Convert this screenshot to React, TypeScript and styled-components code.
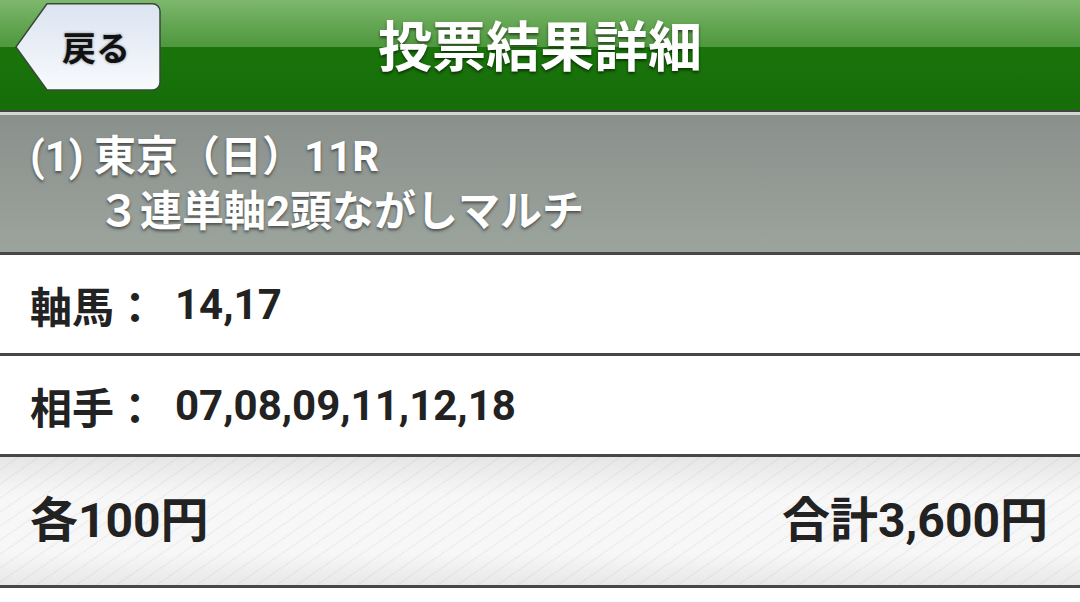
import React from "react";
import styled, { createGlobalStyle } from "styled-components";

const GlobalStyle = createGlobalStyle`
  html, body {
    margin: 0;
    padding: 0;
    background: #ffffff;
  }
  body {
    font-family: Roboto, "Noto Sans CJK JP", sans-serif;
    font-weight: 700;
  }
`;

const rows = [
  { label: "軸馬：", value: "14,17" },
  { label: "相手：", value: "07,08,09,11,12,18" },
];

export default function App() {
  return (
    <>
      <GlobalStyle />
      <Page>
        <Header>
          <BackButton type="button">
            <BackShape viewBox="0 0 146 88" aria-hidden="true">
              <defs>
                <linearGradient id="backFill" x1="0" y1="0" x2="0" y2="1">
                  <stop offset="0" stopColor="#dbe4f1" />
                  <stop offset="1" stopColor="#f8fafd" />
                </linearGradient>
              </defs>
              <path
                d="M32 0.75 H137.5 a7.5 7.5 0 0 1 7.5 7.5 V79.5 a7.5 7.5 0 0 1 -7.5 7.5 H32 L0.9 44 Z"
                fill="url(#backFill)"
                stroke="#3a4838"
                strokeWidth="1.5"
              />
            </BackShape>
            <BackLabel>戻る</BackLabel>
          </BackButton>
          <Title>投票結果詳細</Title>
        </Header>

        <RaceInfo>
          <RaceLine>(1) 東京（日）11R</RaceLine>
          <RaceLine indent>３連単軸2頭ながしマルチ</RaceLine>
        </RaceInfo>

        {rows.map((row) => (
          <DetailRow key={row.label}>
            <RowLabel>{row.label}</RowLabel>
            <RowValue>{row.value}</RowValue>
          </DetailRow>
        ))}

        <Summary>
          <Amount>各100円</Amount>
          <Amount>合計3,600円</Amount>
        </Summary>
      </Page>
    </>
  );
}

const Page = styled.div`
  width: 1080px;
  min-height: 602px;
  background: #ffffff;
`;

const Header = styled.header`
  display: grid;
  grid-template-columns: 1fr auto 1fr;
  align-items: start;
  height: 110px;
  padding-left: 15px;
  background: linear-gradient(
    to bottom,
    #7eb86e 0,
    #64a653 24px,
    #4e983e 47px,
    #1a740b 47px,
    #166d09 100%
  );
  border-bottom: 2px solid #3d483b;
`;

const BackButton = styled.button`
  position: relative;
  justify-self: start;
  margin-top: 3px;
  width: 146px;
  height: 88px;
  padding: 0 0 0 47px;
  border: none;
  background: transparent;
  display: flex;
  align-items: center;
  cursor: pointer;
`;

const BackShape = styled.svg`
  position: absolute;
  inset: 0;
  width: 146px;
  height: 88px;
`;

const BackLabel = styled.span`
  position: relative;
  font-family: "Noto Sans CJK JP", sans-serif;
  font-weight: 700;
  font-size: 34px;
  line-height: 1;
  color: #111111;
  text-shadow: 0 0 3px rgba(0, 0, 0, 0.45);
`;

const Title = styled.h1`
  margin: 17px 0 0 -15px;
  font-family: "Noto Sans CJK JP", sans-serif;
  font-weight: 700;
  font-size: 54px;
  line-height: 54px;
  color: #ffffff;
  text-shadow: 0 2px 3px rgba(0, 0, 0, 0.55);
`;

const RaceInfo = styled.section`
  height: 123px;
  padding: 14px 0 0 30px;
  border-top: 3px solid #d4d8d3;
  border-bottom: 3px solid #474747;
  background: linear-gradient(to bottom, #8a908b, #9ca49e);
`;

const RaceLine = styled.div<{ indent?: boolean }>`
  padding-left: ${({ indent }) => (indent ? "68px" : "0")};
  font-size: 42px;
  line-height: 55px;
  color: #ffffff;
  white-space: nowrap;
  text-shadow: 0 2px 3px rgba(0, 0, 0, 0.5);
`;

const DetailRow = styled.div`
  display: flex;
  align-items: center;
  height: 98px;
  padding-left: 30px;
  border-bottom: 3px solid #474747;
  font-size: 42px;
  color: #222222;
`;

const RowLabel = styled.span`
  margin-right: 19px;
`;

const RowValue = styled.span``;

const Summary = styled.div`
  display: flex;
  align-items: center;
  justify-content: space-between;
  height: 128px;
  padding: 0 32px 0 30px;
  border-bottom: 3px solid #474747;
  background:
    repeating-linear-gradient(
      145deg,
      rgba(0, 0, 0, 0) 0,
      rgba(0, 0, 0, 0) 10px,
      rgba(0, 0, 0, 0.035) 10px,
      rgba(0, 0, 0, 0.035) 11.5px
    ),
    linear-gradient(to bottom, #e6e6e6 0, #f7f7f7 30%, #f7f7f7 75%, #e8e8e8 100%);
`;

const Amount = styled.span`
  font-size: 48px;
  color: #222222;
  line-height: 1;
`;
